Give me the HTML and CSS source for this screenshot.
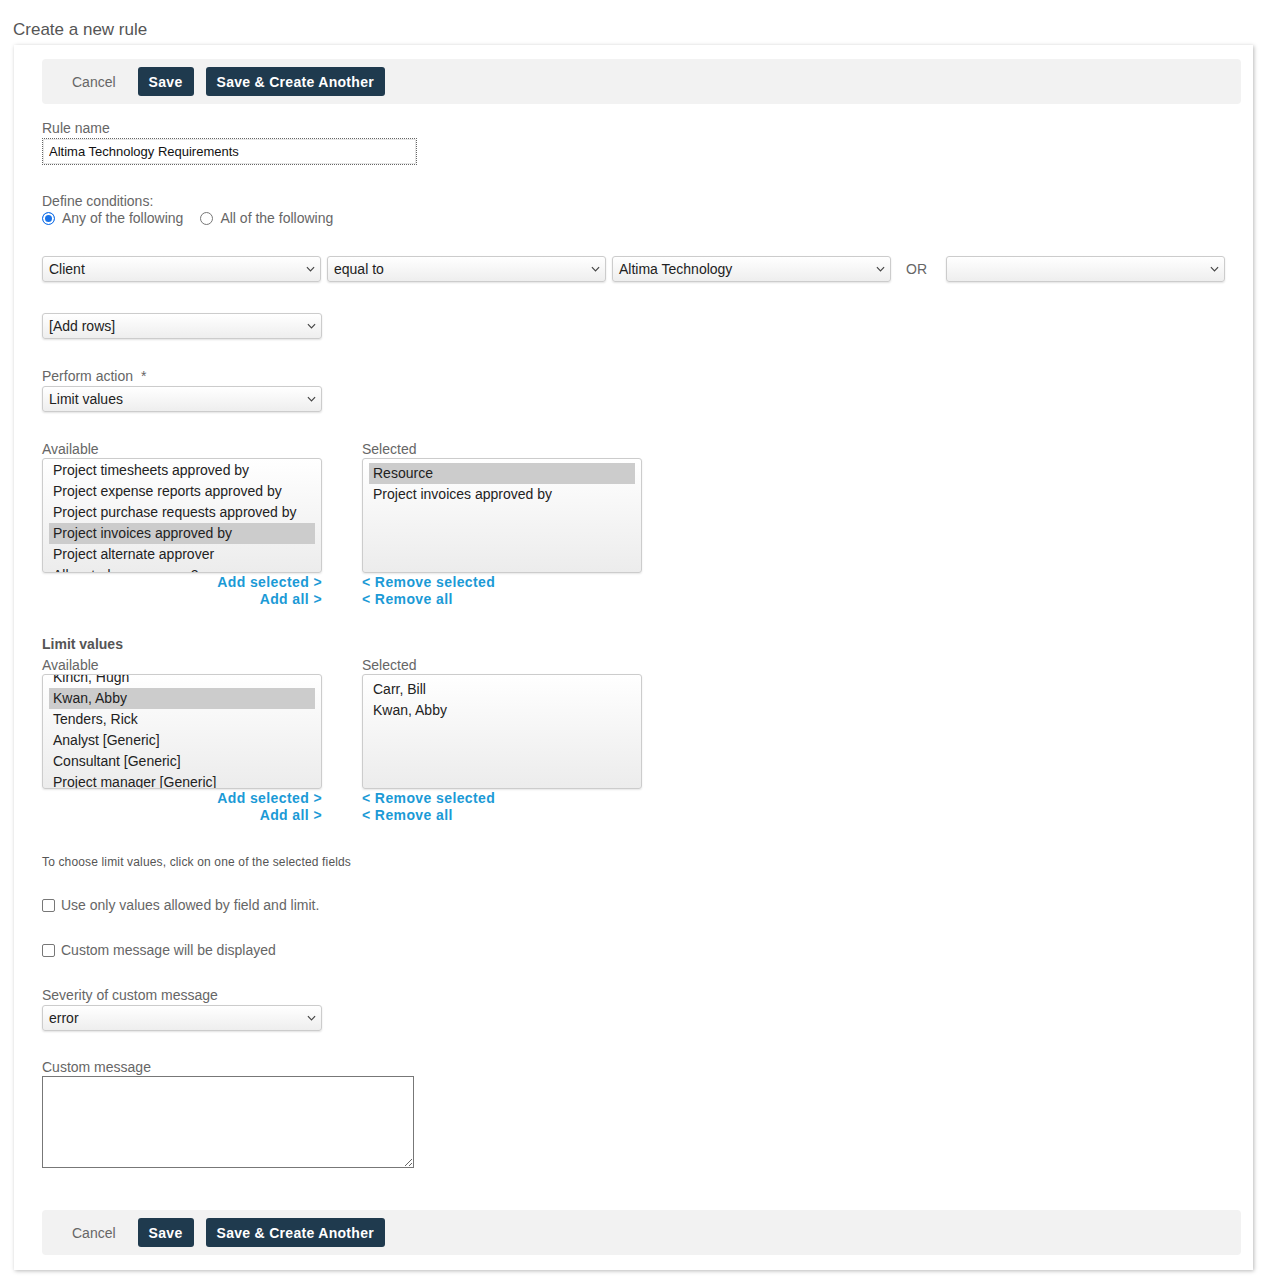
FILE: index.html
```html
<!DOCTYPE html>
<html>
<head>
    <title>Create a new rule</title>
    <link rel="stylesheet" href="styles.css">
</head>
<body>
    <h1 class="page-title">Create a new rule</h1>

    <div class="card">
        <div class="toolbar">
            <a class="cancel">Cancel</a>
            <button class="btn">Save</button>
            <button class="btn">Save &amp; Create Another</button>
        </div>

        <div class="block gap-16">
            <div class="label">Rule name</div>
            <input type="text" class="text-input" value="Altima Technology Requirements">
        </div>

        <div class="block gap-28">
            <div class="label tight">Define conditions:</div>
            <div class="radios">
                <label class="radio-label"><input type="radio" name="match" checked> Any of the following</label>
                <label class="radio-label"><input type="radio" name="match"> All of the following</label>
            </div>
        </div>

        <div class="block gap-30 cond-row">
            <div class="select">Client<svg class="chev" viewBox="0 0 10 6"><path d="M1 1l4 4 4-4"/></svg></div>
            <div class="select">equal to<svg class="chev" viewBox="0 0 10 6"><path d="M1 1l4 4 4-4"/></svg></div>
            <div class="select">Altima Technology<svg class="chev" viewBox="0 0 10 6"><path d="M1 1l4 4 4-4"/></svg></div>
            <span class="or">OR</span>
            <div class="select"><span></span><svg class="chev" viewBox="0 0 10 6"><path d="M1 1l4 4 4-4"/></svg></div>
        </div>

        <div class="block gap-31">
            <div class="select">[Add rows]<svg class="chev" viewBox="0 0 10 6"><path d="M1 1l4 4 4-4"/></svg></div>
        </div>

        <div class="block gap-29">
            <div class="label">Perform action <span class="req">*</span></div>
            <div class="select">Limit values<svg class="chev" viewBox="0 0 10 6"><path d="M1 1l4 4 4-4"/></svg></div>
        </div>

        <!-- fields -->
        <div class="block gap-29 dual">
            <div class="dual-col">
                <div class="label tight">Available</div>
                <div class="listbox">
                    <div class="list-inner">
                        <div class="item">Project timesheets approved by</div>
                        <div class="item">Project expense reports approved by</div>
                        <div class="item">Project purchase requests approved by</div>
                        <div class="item active">Project invoices approved by</div>
                        <div class="item">Project alternate approver</div>
                        <div class="item">Allocated resource — 2</div>
                    </div>
                </div>
                <div class="links right">
                    <a>Add selected &gt;</a>
                    <a>Add all &gt;</a>
                </div>
            </div>
            <div class="dual-col">
                <div class="label tight">Selected</div>
                <div class="listbox selected">
                    <div class="item active">Resource</div>
                    <div class="item">Project invoices approved by</div>
                </div>
                <div class="links">
                    <a>&lt; Remove selected</a>
                    <a>&lt; Remove all</a>
                </div>
            </div>
        </div>

        <!-- limit values -->
        <div class="block gap-28">
            <div class="heading">Limit values</div>
            <div class="dual">
                <div class="dual-col">
                    <div class="label tight">Available</div>
                    <div class="listbox">
                        <div class="list-inner scrolled">
                            <div class="item">Kinch, Hugh</div>
                            <div class="item active">Kwan, Abby</div>
                            <div class="item">Tenders, Rick</div>
                            <div class="item">Analyst [Generic]</div>
                            <div class="item">Consultant [Generic]</div>
                            <div class="item">Project manager [Generic]</div>
                        </div>
                    </div>
                    <div class="links right">
                        <a>Add selected &gt;</a>
                        <a>Add all &gt;</a>
                    </div>
                </div>
                <div class="dual-col">
                    <div class="label tight">Selected</div>
                    <div class="listbox selected">
                        <div class="item">Carr, Bill</div>
                        <div class="item">Kwan, Abby</div>
                    </div>
                    <div class="links">
                        <a>&lt; Remove selected</a>
                        <a>&lt; Remove all</a>
                    </div>
                </div>
            </div>
        </div>

        <div class="block gap-31 note">To choose limit values, click on one of the selected fields</div>

        <label class="block gap-28 check-label"><input type="checkbox"> Use only values allowed by field and limit.</label>
        <label class="block gap-29 check-label"><input type="checkbox"> Custom message will be displayed</label>

        <div class="block gap-29">
            <div class="label">Severity of custom message</div>
            <div class="select">error<svg class="chev" viewBox="0 0 10 6"><path d="M1 1l4 4 4-4"/></svg></div>
        </div>

        <div class="block gap-28">
            <div class="label tight">Custom message</div>
            <textarea class="message"></textarea>
        </div>

        <div class="toolbar bottom">
            <a class="cancel">Cancel</a>
            <button class="btn">Save</button>
            <button class="btn">Save &amp; Create Another</button>
        </div>
    </div>
</body>
</html>
```

FILE: styles.css
```css
body {
    margin: 0;
    padding: 0 17px 20px 14px;
    font-family: 'Liberation Sans', Arial, sans-serif;
    font-size: 14px;
    color: #222;
    background-color: #fff;
}

.page-title {
    font-size: 17px;
    font-weight: normal;
    line-height: 20px;
    color: #555;
    margin: 20px 0 5px -1px;
}

.card {
    background-color: #fff;
    padding: 14px 12px 15px 28px;
    box-shadow: 1px 1px 4px rgba(0, 0, 0, 0.28);
}

/* Toolbar */
.toolbar {
    display: flex;
    align-items: center;
    gap: 12px;
    height: 45px;
    padding-left: 30px;
    background-color: #f2f2f2;
    border-radius: 4px;
}

.toolbar.bottom {
    margin-top: 42px;
}

.cancel {
    color: #666;
    font-size: 14px;
    margin-right: 10px;
    cursor: pointer;
}

.btn {
    height: 29px;
    padding: 0 11px;
    border: none;
    border-radius: 3px;
    background-color: #1f3a4e;
    color: #fff;
    font-family: 'Liberation Sans', Arial, sans-serif;
    font-size: 14px;
    font-weight: bold;
    letter-spacing: 0.3px;
    cursor: pointer;
}

/* Blocks */
.block {
    display: block;
}

.gap-16 { margin-top: 16px; }
.gap-28 { margin-top: 28px; }
.gap-29 { margin-top: 29px; }
.gap-30 { margin-top: 30px; }
.gap-31 { margin-top: 31px; }

.label {
    color: #666;
    font-size: 14px;
    line-height: 16px;
    height: 16px;
    margin-bottom: 2px;
}

.label.tight {
    margin-bottom: 1px;
}

.req {
    margin-left: 4px;
}

.heading {
    color: #555;
    font-weight: bold;
    font-size: 14px;
    line-height: 16px;
    margin-bottom: 5px;
}

.text-input {
    display: block;
    box-sizing: border-box;
    width: 375px;
    height: 27px;
    padding: 0 6px;
    border: 1px dotted #666;
    outline: 1px solid #e6e6e6;
    outline-offset: -2px;
    font-family: 'Liberation Sans', Arial, sans-serif;
    font-size: 13px;
    color: #111;
}

/* Radios and checkboxes */
.radios {
    display: flex;
    gap: 17px;
    height: 16px;
    line-height: 16px;
    color: #666;
}

.radio-label {
    display: flex;
    align-items: center;
    gap: 7px;
    height: 16px;
}

.radio-label input {
    appearance: none;
    width: 13px;
    height: 13px;
    margin: 0;
    border: 1.5px solid #777;
    border-radius: 50%;
    box-sizing: border-box;
}

.radio-label input:checked {
    border: 1.5px solid #1a73e8;
    background-color: #1a73e8;
    box-shadow: inset 0 0 0 2px #fff;
}

.check-label {
    display: flex;
    align-items: center;
    gap: 6px;
    height: 16px;
    line-height: 16px;
    color: #666;
}

.check-label input {
    appearance: none;
    width: 13px;
    height: 13px;
    margin: 0;
    border: 1.5px solid #777;
    border-radius: 2px;
    box-sizing: border-box;
    background-color: #fff;
}

/* Selects */
.select {
    box-sizing: border-box;
    display: flex;
    align-items: center;
    justify-content: space-between;
    width: 280px;
    height: 26px;
    padding: 0 5px 0 6px;
    border: 1px solid #ccc;
    border-radius: 3px;
    background: linear-gradient(#ffffff, #eeeeee);
    box-shadow: 0 1px 2px rgba(0, 0, 0, 0.12);
    color: #222;
    font-size: 14px;
}

.chev {
    width: 9px;
    height: 6px;
    fill: none;
    stroke: #444;
    stroke-width: 1.3;
}

.cond-row {
    display: flex;
    align-items: center;
    gap: 6px;
}

.cond-row .select {
    width: 279px;
}

.or {
    color: #666;
    margin: 0 13px 0 9px;
}

/* Dual listboxes */
.dual {
    display: flex;
    gap: 40px;
}

.dual-col {
    width: 280px;
}

.listbox {
    box-sizing: border-box;
    height: 115px;
    overflow: hidden;
    padding: 1px 6px 0;
    border: 1px solid #ccc;
    border-radius: 3px;
    background: linear-gradient(#ffffff, #ececec);
    box-shadow: 0 1px 2px rgba(0, 0, 0, 0.1);
}

.listbox.selected {
    padding-top: 4px;
}

.list-inner.scrolled {
    margin-top: -9px;
}

.item {
    padding: 0 4px;
    line-height: 21px;
    height: 21px;
    white-space: nowrap;
    overflow: hidden;
    color: #222;
}

.item.active {
    background-color: #cccccc;
}

.links {
    display: flex;
    flex-direction: column;
    align-items: flex-start;
    margin-top: 1px;
}

.links.right {
    align-items: flex-end;
}

.links a {
    color: #1b9ad6;
    font-size: 14px;
    font-weight: bold;
    letter-spacing: 0.4px;
    line-height: 17px;
    cursor: pointer;
}

.note {
    font-size: 12px;
    line-height: 14px;
    letter-spacing: 0.15px;
    color: #555;
}

.message {
    display: block;
    box-sizing: border-box;
    width: 372px;
    height: 92px;
    border: 1px solid #777;
    resize: both;
    font-family: 'Liberation Sans', Arial, sans-serif;
}
```
